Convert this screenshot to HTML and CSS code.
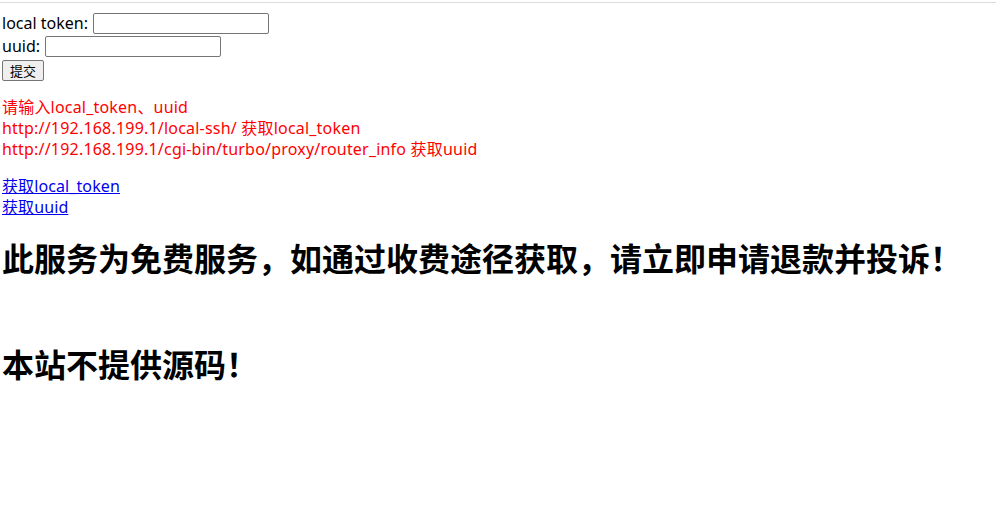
FILE: index.html
```html
<!DOCTYPE html>
<html lang="zh-CN">
<head>
<meta charset="utf-8">
<title>local token</title>
<link rel="stylesheet" href="styles.css">
</head>
<body>
<div class="topline"></div>
<form class="form">
  <div class="row"><label for="tok">local token:</label> <input id="tok" class="field" type="text"></div>
  <div class="row"><label for="uuid">uuid:</label> <input id="uuid" class="field" type="text"></div>
  <div class="row"><button type="button" class="btn">提交</button></div>
</form>
<p class="hint">请输入local_token、uuid<br>http://192.168.199.1/local-ssh/ 获取local_token<br>http://192.168.199.1/cgi-bin/turbo/proxy/router_info 获取uuid</p>
<p class="links"><a href="#">获取local_token</a><br><a href="#">获取uuid</a></p>
<h1 class="notice">此服务为免费服务，如通过收费途径获取，请立即申请退款并投诉！</h1>
<h1 class="notice second">本站不提供源码！</h1>
</body>
</html>
```
FILE: styles.css
```css
html, body {
  margin: 0;
  padding: 0;
  background: #fff;
}
body {
  padding: 0 2px;
  font-family: "Noto Sans", "Noto Sans CJK SC", sans-serif;
  font-size: 16px;
  line-height: 21px;
  color: #000;
}
.topline {
  margin: 2px -2px 0 -2px;
  height: 1px;
  background: #dcdcdc;
}
.form {
  margin: 9px 0 0 0;
}
.row {
  height: 23px;
  display: flex;
  align-items: center;
  gap: 5px;
}
.field {
  width: 176px;
  height: 21px;
  box-sizing: border-box;
  border: 1px solid #767676;
  border-radius: 2px;
  padding: 1px 2px;
  margin: 0;
  font: 13px "Noto Sans", sans-serif;
}
.btn {
  height: 21px;
  width: 42px;
  box-sizing: border-box;
  border: 1px solid #767676;
  border-radius: 2px;
  background: #efefef;
  font: 13px "Noto Sans CJK SC", sans-serif;
  padding: 0;
  color: #000;
  margin-top: 1px;
}
.hint {
  color: #f00;
  margin: 16px 0;
  letter-spacing: 0.2px;
}
.links {
  margin: 16px 0;
  letter-spacing: 0.1px;
}
.links a {
  color: #00e;
  text-decoration: underline;
}
.notice {
  font-family: "Noto Sans CJK SC", sans-serif;
  font-size: 32px;
  font-weight: bold;
  line-height: 42px;
  margin: 18px 0 0 0;
}
.notice.second {
  margin-top: 64px;
}
```
